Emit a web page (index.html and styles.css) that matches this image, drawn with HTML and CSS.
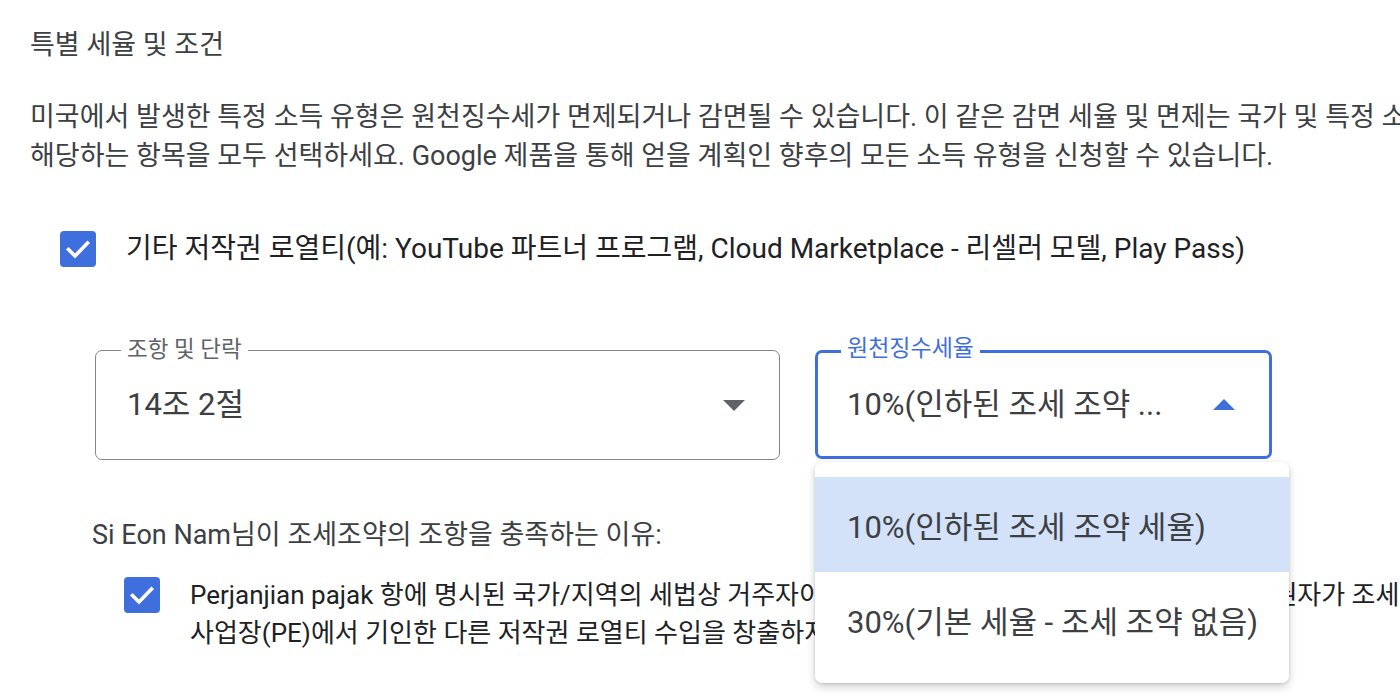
FILE: index.html
```html
<!DOCTYPE html>
<html lang="ko">
<head>
<meta charset="utf-8">
<title>특별 세율 및 조건</title>
<link rel="stylesheet" href="styles.css">
</head>
<body>
<main class="page">
  <h2 class="title">특별 세율 및 조건</h2>
  <p class="desc">미국에서 발생한 특정 소득 유형은 원천징수세가 면제되거나 감면될 수 있습니다. 이 같은 감면 세율 및 면제는 국가 및 특정 소득 유형에 따라 다릅니다.<br>해당하는 항목을 모두 선택하세요. Google 제품을 통해 얻을 계획인 향후의 모든 소득 유형을 신청할 수 있습니다.</p>

  <label class="check-row main-check">
    <svg class="cb" width="36" height="36" viewBox="0 0 36 36"><rect x="0" y="0" width="36" height="36" rx="4" fill="#3f6fdc"/><path d="M8.5 18.5l6.5 6.5 12.5-13" fill="none" stroke="#fff" stroke-width="3.6" stroke-linecap="square"/></svg>
    <span class="check-text">기타 저작권 로열티(예: YouTube 파트너 프로그램, Cloud Marketplace - 리셀러 모델, Play Pass)</span>
  </label>

  <div class="fields">
    <div class="select">
      <span class="select-label">조항 및 단락</span>
      <span class="select-value">14조 2절</span>
      <svg class="arrow" width="22" height="11" viewBox="0 0 22 11"><path d="M0 0h22L11 11z" fill="#5f6368"/></svg>
    </div>
    <div class="select focused">
      <span class="select-label">원천징수세율</span>
      <span class="select-value">10%(인하된 조세 조약 ...</span>
      <svg class="arrow" width="22" height="11" viewBox="0 0 22 11"><path d="M0 11h22L11 0z" fill="#3f6fdc"/></svg>
      <ul class="menu">
        <li class="opt selected">10%(인하된 조세 조약 세율)</li>
        <li class="opt">30%(기본 세율 - 조세 조약 없음)</li>
      </ul>
    </div>
  </div>

  <p class="reason">Si Eon Nam님이 조세조약의 조항을 충족하는 이유:</p>

  <label class="check-row sub-check">
    <svg class="cb" width="36" height="36" viewBox="0 0 36 36"><rect x="0" y="0" width="36" height="36" rx="4" fill="#3f6fdc"/><path d="M8.5 18.5l6.5 6.5 12.5-13" fill="none" stroke="#fff" stroke-width="3.6" stroke-linecap="square"/></svg>
    <span class="check-text sub-text">Perjanjian pajak 항에 명시된 국가/지역의 세법상 거주자이며, 미국 내에 고정사업장이 없는 해당 저작권자가 조세조약의 혜택을 받을 자격이 있고, 미국 내 고정<br>사업장(PE)에서 기인한 다른 저작권 로열티 수입을 창출하지 않습니다.</span>
  </label>
</main>
</body>
</html>
```
FILE: styles.css
```css
html, body {
  margin: 0;
  padding: 0;
  background: #ffffff;
  overflow: hidden;
  width: 1400px;
  height: 698px;
}

body {
  font-family: Roboto, "Noto Sans CJK KR", sans-serif;
  color: #3c4043;
}

.page {
  padding: 26px 0 0 30px;
  white-space: nowrap;
}

.title {
  margin: 0;
  font-size: 27px;
  font-weight: 400;
  line-height: 38px;
  color: #3c4043;
}

.desc {
  margin: 34px 0 0;
  font-size: 27px;
  line-height: 39px;
  color: #3c4043;
}

.check-row {
  display: flex;
  align-items: flex-start;
  gap: 30px;
}

.main-check {
  margin: 54px 0 0 30px;
  align-items: center;
}

.check-text {
  font-size: 28px;
  line-height: 38px;
  color: #202124;
}

.cb {
  flex: none;
}

.fields {
  display: flex;
  gap: 35px;
  margin: 82px 0 0 65px;
}

.select {
  position: relative;
  box-sizing: border-box;
  height: 110px;
  border: 1.5px solid #80868b;
  border-radius: 7px;
  display: flex;
  align-items: center;
  padding: 0 34px 0 31px;
  width: 685px;
  justify-content: space-between;
}

.select.focused {
  width: 457px;
  height: 109px;
  border: 3px solid #3f6fdc;
  padding: 0 34px 0 29px;
}

.select-label {
  position: absolute;
  top: -16px;
  left: 25px;
  padding: 0 6px;
  background: #fff;
  font-size: 22.5px;
  line-height: 28px;
  color: #5f6368;
}

.focused .select-label {
  color: #3f6fdc;
  left: 23px;
  font-size: 23px;
  top: -18px;
}

.select-value {
  font-size: 31px;
  line-height: 38px;
  color: #3c4043;
}

.menu {
  position: absolute;
  top: 109px;
  left: -3px;
  width: 474px;
  margin: 0;
  padding: 15px 0 16px;
  list-style: none;
  background: #fff;
  border-radius: 7px;
  box-shadow: 0 4px 10px rgba(0, 0, 0, 0.18), 0 1px 3px rgba(0, 0, 0, 0.12);
  z-index: 5;
}

.opt {
  height: 95px;
  display: flex;
  align-items: center;
  padding-left: 32px;
  font-size: 31px;
  color: #3c4043;
}

.opt.selected {
  background: #d3e1f9;
}

.reason {
  margin: 56px 0 0 62px;
  font-size: 27px;
  line-height: 38px;
  color: #3c4043;
}

.sub-check {
  margin: 22px 0 0 94px;
}

.sub-check .cb {
  margin-top: 1px;
}

.sub-text {
  font-size: 26px;
  line-height: 38px;
}
```
